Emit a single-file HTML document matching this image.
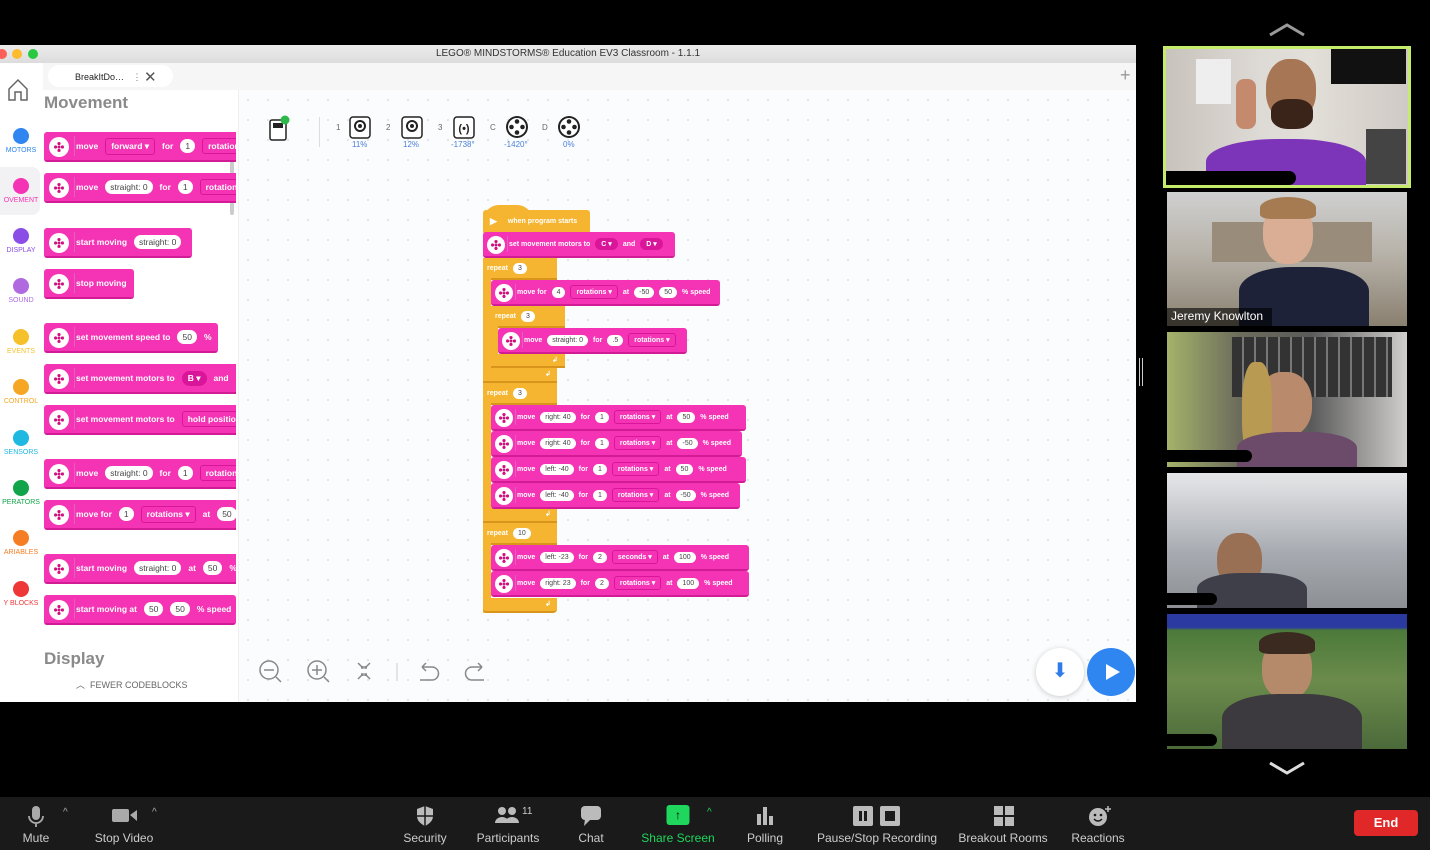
<!DOCTYPE html>
<html><head><meta charset="utf-8"><style>
*{margin:0;padding:0;box-sizing:border-box}
body{width:1430px;height:850px;background:#000;position:relative;overflow:hidden;font-family:"Liberation Sans",sans-serif}
.abs{position:absolute}
.app{position:absolute;left:0;top:45px;width:1136px;height:657px;background:#fff;overflow:hidden}
.tb{position:absolute;left:0;top:0;width:1136px;height:18px;background:linear-gradient(#ececec,#dcdcdc);font-size:10px;color:#333;text-align:center;line-height:18px}
.dot{position:absolute;top:4px;width:10px;height:10px;border-radius:50%}
.canvas{position:absolute;left:238px;top:45px;width:898px;height:612px;background-color:#fbfcfe;background-image:radial-gradient(#dfe3ea 1px,transparent 1.2px);background-size:20px 20px}
.b{position:absolute;background:#f434b4;border-radius:3px;height:26px;color:#fff;font-size:7px;font-weight:bold;display:flex;align-items:center;white-space:nowrap;overflow:hidden;padding-left:26px;gap:5px;border-bottom:2px solid #d21c95}
.b.L{height:30px;font-size:8.5px;padding-left:32px;gap:7px}
.ic{position:absolute;left:4px;top:4px;width:18px;height:18px;border-radius:50%;background:#fff}
.ic::before{content:"";position:absolute;left:4px;top:4px;width:10px;height:10px;border-radius:50%;background:radial-gradient(circle at 50% 15%,#d0107f 1.6px,transparent 1.8px),radial-gradient(circle at 15% 50%,#d0107f 1.6px,transparent 1.8px),radial-gradient(circle at 85% 50%,#d0107f 1.6px,transparent 1.8px),radial-gradient(circle at 50% 85%,#d0107f 1.6px,transparent 1.8px),radial-gradient(circle at 50% 50%,#d0107f 1.4px,transparent 1.6px)}
.L .ic{left:5px;top:5px;width:20px;height:20px}
.L .ic::before{left:5px;top:5px}
.sep{position:absolute;left:24px;top:4px;bottom:4px;width:1px;background:#e060c0}
.L .sep{left:30px}
.p{background:#fff;color:#444;border-radius:9px;padding:2px 5px;font-weight:normal}
.d{background:#d9169a;border-radius:9px;padding:2px 6px;color:#fff}
.dd{border:1px solid #d9169a;border-radius:3px;padding:2px 5px}
.y{position:absolute;background:#f6b530;border-bottom:2px solid #d9951b}
.ylab{position:absolute;color:#fff;font-size:7px;font-weight:bold;display:flex;align-items:center;gap:5px}
.cat{position:absolute;left:0;width:42px;text-align:center;font-size:7px}
.cat i{display:block;width:16px;height:16px;border-radius:50%;margin:0 auto 3px}
.tile{position:absolute;left:1167px;width:240px;overflow:hidden}
.zb{position:absolute;left:0;top:797px;width:1430px;height:53px;background:#1a1a1a}
.zi{position:absolute;top:34px;color:#ccc;font-size:12px;transform:translateX(-50%);white-space:nowrap}
.ico{position:absolute;top:8px;transform:translateX(-50%)}
</style></head><body>

<div class="app">
  <div class="tb">LEGO® MINDSTORMS® Education EV3 Classroom - 1.1.1</div>
  <div class="dot" style="left:-3px;background:#fc5f57"></div>
  <div class="dot" style="left:12px;background:#fdbc2e"></div>
  <div class="dot" style="left:28px;background:#28c840"></div>
  <div class="abs" style="left:43px;top:18px;width:1093px;height:27px;background:#f6f6f6"></div>
  <div class="abs" style="left:48px;top:20px;width:125px;height:22px;background:#fff;border-radius:11px;font-size:9px;color:#222;line-height:22px;padding-left:27px">BreakItDo… <span style="color:#777;margin-left:6px">⋮</span> <span style="font-size:15px;color:#555;position:relative;top:2px">✕</span></div>
  <div class="abs" style="left:1120px;top:20px;font-size:18px;color:#999">+</div>
  <svg class="abs" style="left:7px;top:33px" width="22" height="24" viewBox="0 0 22 24"><path d="M2 11 L11 2 L20 11 V22 H14 V14 H8 V22 H2 Z" fill="none" stroke="#666" stroke-width="1.5"/></svg>
  <div class="abs" style="left:0;top:122px;width:40px;height:48px;background:#f2f2f4;border-radius:0 8px 8px 0"></div>
  <div class="cat" style="top:83px;color:#2f86f0"><i style="background:#2f86f0"></i>MOTORS</div>
  <div class="cat" style="top:133px;color:#f434b4"><i style="background:#f434b4"></i>OVEMENT</div>
  <div class="cat" style="top:183px;color:#8a4de6"><i style="background:#8a4de6"></i>DISPLAY</div>
  <div class="cat" style="top:233px;color:#b06ae0"><i style="background:#b06ae0"></i>SOUND</div>
  <div class="cat" style="top:284px;color:#f5c02a"><i style="background:#f5c02a"></i>EVENTS</div>
  <div class="cat" style="top:334px;color:#f5a623"><i style="background:#f5a623"></i>CONTROL</div>
  <div class="cat" style="top:385px;color:#1fb8e0"><i style="background:#1fb8e0"></i>SENSORS</div>
  <div class="cat" style="top:435px;color:#11a44a"><i style="background:#11a44a"></i>PERATORS</div>
  <div class="cat" style="top:485px;color:#f57d23"><i style="background:#f57d23"></i>ARIABLES</div>
  <div class="cat" style="top:536px;color:#ee3838"><i style="background:#ee3838"></i>Y BLOCKS</div>
  <div class="abs" style="left:44px;top:48px;font-size:17px;font-weight:bold;color:#8a8a8a">Movement</div>
  <div class="abs" style="left:44px;top:604px;font-size:17px;font-weight:bold;color:#8a8a8a">Display</div>
  <div class="abs" style="left:76px;top:633px;font-size:9px;color:#666">︿ &nbsp;FEWER CODEBLOCKS</div>
  <div class="abs" style="left:230px;top:105px;width:4px;height:65px;background:#ccc;border-radius:2px"></div>
  <div style="position:absolute;left:0;top:0;width:236px;height:657px;overflow:hidden">
   <div class="b L" style="left:44px;top:87px;width:200px"><i class="ic"></i><i class="sep"></i>move <span class="dd">forward ▾</span> for <span class="p">1</span> <span class="dd">rotations</span></div>
   <div class="b L" style="left:44px;top:128px;width:200px"><i class="ic"></i><i class="sep"></i>move <span class="p">straight: 0</span> for <span class="p">1</span> <span class="dd">rotations</span></div>
   <div class="b L" style="left:44px;top:183px;width:148px"><i class="ic"></i><i class="sep"></i>start moving <span class="p">straight: 0</span></div>
   <div class="b L" style="left:44px;top:224px;width:90px"><i class="ic"></i><i class="sep"></i>stop moving</div>
   <div class="b L" style="left:44px;top:278px;width:174px"><i class="ic"></i><i class="sep"></i>set movement speed to <span class="p">50</span> %</div>
   <div class="b L" style="left:44px;top:319px;width:200px"><i class="ic"></i><i class="sep"></i>set movement motors to <span class="d">B ▾</span> and</div>
   <div class="b L" style="left:44px;top:360px;width:200px"><i class="ic"></i><i class="sep"></i>set movement motors to <span class="dd">hold position</span></div>
   <div class="b L" style="left:44px;top:414px;width:200px"><i class="ic"></i><i class="sep"></i>move <span class="p">straight: 0</span> for <span class="p">1</span> <span class="dd">rotations</span></div>
   <div class="b L" style="left:44px;top:455px;width:200px"><i class="ic"></i><i class="sep"></i>move for <span class="p">1</span> <span class="dd">rotations ▾</span> at <span class="p">50</span></div>
   <div class="b L" style="left:44px;top:509px;width:200px"><i class="ic"></i><i class="sep"></i>start moving <span class="p">straight: 0</span> at <span class="p">50</span> %</div>
   <div class="b L" style="left:44px;top:550px;width:192px"><i class="ic"></i><i class="sep"></i>start moving at <span class="p">50</span> <span class="p">50</span> % speed</div>
  </div>
  <div class="canvas"></div>
  <div class="abs" style="left:238px;top:45px;width:1px;height:612px;background:#eee"></div>
  <svg class="abs" style="left:268px;top:69px" width="24" height="28"><rect x="2" y="6" width="16" height="20" rx="2" fill="#fff" stroke="#222" stroke-width="1.5"/><rect x="5" y="9" width="10" height="5" fill="#222"/><circle cx="17" cy="6" r="4.5" fill="#2db84a"/></svg>
  <div class="abs" style="left:319px;top:72px;width:1px;height:30px;background:#ddd"></div>
  <div class="abs" style="left:336px;top:78px;font-size:8px;color:#666">1</div>
  <div class="abs" style="left:386px;top:78px;font-size:8px;color:#666">2</div>
  <div class="abs" style="left:438px;top:78px;font-size:8px;color:#666">3</div>
  <div class="abs" style="left:490px;top:78px;font-size:8px;color:#666">C</div>
  <div class="abs" style="left:542px;top:78px;font-size:8px;color:#666">D</div>
  <svg class="abs" style="left:349px;top:71px" width="240" height="24">
   <rect x="1" y="1" width="20" height="21" rx="3" fill="#fff" stroke="#222" stroke-width="1.5"/><circle cx="11" cy="10" r="5" fill="none" stroke="#222" stroke-width="2"/><circle cx="11" cy="10" r="2" fill="#222"/>
   <rect x="53" y="1" width="20" height="21" rx="3" fill="#fff" stroke="#222" stroke-width="1.5"/><circle cx="63" cy="10" r="5" fill="none" stroke="#222" stroke-width="2"/><circle cx="63" cy="10" r="2" fill="#222"/>
   <rect x="105" y="1" width="20" height="21" rx="3" fill="#fff" stroke="#222" stroke-width="1.5"/><text x="115" y="16" font-size="11" font-weight="bold" text-anchor="middle" fill="#222">(•)</text>
   <circle cx="168" cy="11" r="11" fill="#222"/><circle cx="168" cy="11" r="9" fill="#fff"/><circle cx="168" cy="5.5" r="2.3" fill="#222"/><circle cx="168" cy="16.5" r="2.3" fill="#222"/><circle cx="162.5" cy="11" r="2.3" fill="#222"/><circle cx="173.5" cy="11" r="2.3" fill="#222"/>
   <circle cx="220" cy="11" r="11" fill="#222"/><circle cx="220" cy="11" r="9" fill="#fff"/><circle cx="220" cy="5.5" r="2.3" fill="#222"/><circle cx="220" cy="16.5" r="2.3" fill="#222"/><circle cx="214.5" cy="11" r="2.3" fill="#222"/><circle cx="225.5" cy="11" r="2.3" fill="#222"/>
  </svg>
  <div class="abs" style="left:352px;top:95px;font-size:8px;color:#4a7fd8">11%</div>
  <div class="abs" style="left:403px;top:95px;font-size:8px;color:#4a7fd8">12%</div>
  <div class="abs" style="left:451px;top:95px;font-size:8px;color:#4a7fd8">-1738°</div>
  <div class="abs" style="left:504px;top:95px;font-size:8px;color:#4a7fd8">-1420°</div>
  <div class="abs" style="left:563px;top:95px;font-size:8px;color:#4a7fd8">0%</div>

  <div class="y" style="left:483px;top:160px;width:50px;height:16px;border-radius:22px 22px 0 0;border:none"></div>
  <div class="y" style="left:483px;top:165px;width:107px;height:23px;border-radius:3px 3px 0 0;border:none"></div>
  <div class="ylab" style="left:490px;top:171px"><span style="font-size:9px">▶</span><span style="margin-left:6px">when program starts</span></div>
  <div class="y" style="left:483px;top:213px;width:74px;height:22px"></div>
  <div class="y" style="left:483px;top:213px;width:8px;height:125px;border:none"></div>
  <div class="y" style="left:483px;top:323px;width:74px;height:15px"></div>
  <div class="y" style="left:491px;top:261px;width:74px;height:22px"></div>
  <div class="y" style="left:491px;top:261px;width:7px;height:64px;border:none"></div>
  <div class="y" style="left:491px;top:309px;width:74px;height:14px"></div>
  <div class="y" style="left:483px;top:338px;width:74px;height:22px"></div>
  <div class="y" style="left:483px;top:338px;width:8px;height:140px;border:none"></div>
  <div class="y" style="left:483px;top:463px;width:74px;height:15px"></div>
  <div class="y" style="left:483px;top:478px;width:74px;height:22px"></div>
  <div class="y" style="left:483px;top:478px;width:8px;height:90px;border:none"></div>
  <div class="y" style="left:483px;top:553px;width:74px;height:15px;border-radius:0 0 4px 4px"></div>
  <div class="ylab" style="left:487px;top:218px">repeat <span class="p" style="font-size:7px">3</span></div>
  <div class="ylab" style="left:495px;top:266px">repeat <span class="p" style="font-size:7px">3</span></div>
  <div class="ylab" style="left:487px;top:343px">repeat <span class="p" style="font-size:7px">3</span></div>
  <div class="ylab" style="left:487px;top:483px">repeat <span class="p" style="font-size:7px">10</span></div>
  <div class="ylab" style="left:552px;top:311px">↲</div>
  <div class="ylab" style="left:545px;top:325px">↲</div>
  <div class="ylab" style="left:545px;top:465px">↲</div>
  <div class="ylab" style="left:545px;top:555px">↲</div>

  <div class="b" style="left:483px;top:187px;width:192px"><i class="ic"></i><i class="sep"></i>set movement motors to <span class="d">C ▾</span> and <span class="d">D ▾</span></div>
  <div class="b" style="left:491px;top:235px;width:229px"><i class="ic"></i><i class="sep"></i>move for <span class="p">4</span> <span class="dd">rotations ▾</span> at <span class="p">-50</span> <span class="p">50</span> % speed</div>
  <div class="b" style="left:498px;top:283px;width:189px"><i class="ic"></i><i class="sep"></i>move <span class="p">straight: 0</span> for <span class="p">.5</span> <span class="dd">rotations ▾</span></div>
  <div class="b" style="left:491px;top:360px;width:255px"><i class="ic"></i><i class="sep"></i>move <span class="p">right: 40</span> for <span class="p">1</span> <span class="dd">rotations ▾</span> at <span class="p">50</span> % speed</div>
  <div class="b" style="left:491px;top:386px;width:251px"><i class="ic"></i><i class="sep"></i>move <span class="p">right: 40</span> for <span class="p">1</span> <span class="dd">rotations ▾</span> at <span class="p">-50</span> % speed</div>
  <div class="b" style="left:491px;top:412px;width:255px"><i class="ic"></i><i class="sep"></i>move <span class="p">left: -40</span> for <span class="p">1</span> <span class="dd">rotations ▾</span> at <span class="p">50</span> % speed</div>
  <div class="b" style="left:491px;top:438px;width:249px"><i class="ic"></i><i class="sep"></i>move <span class="p">left: -40</span> for <span class="p">1</span> <span class="dd">rotations ▾</span> at <span class="p">-50</span> % speed</div>
  <div class="b" style="left:491px;top:500px;width:258px"><i class="ic"></i><i class="sep"></i>move <span class="p">left: -23</span> for <span class="p">2</span> <span class="dd">seconds ▾</span> at <span class="p">100</span> % speed</div>
  <div class="b" style="left:491px;top:526px;width:258px"><i class="ic"></i><i class="sep"></i>move <span class="p">right: 23</span> for <span class="p">2</span> <span class="dd">rotations ▾</span> at <span class="p">100</span> % speed</div>

  <svg class="abs" style="left:258px;top:614px" width="240" height="26" fill="none" stroke="#888" stroke-width="1.5">
   <circle cx="11" cy="11" r="9"/><path d="M6 11H16M18 18L23 23"/>
   <circle cx="59" cy="11" r="9"/><path d="M54 11H64M59 6V16M66 18L71 23"/>
   <path d="M100 4L105 9M112 4L107 9M100 20L105 15M112 20L107 15M103 9H105V7M109 9H107V7M103 15H105V17M109 15H107V17"/>
   <path d="M139 4V22" stroke="#ddd"/>
   <path d="M164 8H174A6 6 0 0 1 174 21H162M164 8L168 4M164 8L168 12"/>
   <path d="M224 8H214A6 6 0 0 0 214 21H226M224 8L220 4M224 8L220 12"/>
  </svg>
  <div class="abs" style="left:1036px;top:603px;width:48px;height:48px;border-radius:50%;background:#fff;box-shadow:0 1px 6px rgba(0,0,0,.2);color:#2f7ce8;font-size:20px;text-align:center;line-height:46px">⬇</div>
  <div class="abs" style="left:1087px;top:603px;width:48px;height:48px;border-radius:50%;background:#2f86f0"></div>
  <svg class="abs" style="left:1103px;top:617px" width="20" height="20"><path d="M3 2L17 10L3 18Z" fill="#fff"/></svg>
</div>
<div class="abs" style="left:1139px;top:358px;width:4px;height:28px;border-left:1px solid #ccc;border-right:1px solid #ccc"></div>

<svg class="abs" style="left:1268px;top:22px" width="38" height="16"><path d="M2 13L19 3L36 13" fill="none" stroke="#999" stroke-width="3"/></svg>
<svg class="abs" style="left:1268px;top:760px" width="38" height="16"><path d="M2 3L19 13L36 3" fill="none" stroke="#ddd" stroke-width="3"/></svg>
<div class="abs" style="left:1163px;top:46px;width:248px;height:142px;border:3px solid #c4ec6a;background:#7a6a60;overflow:hidden">
 <div class="abs" style="left:0;top:0;width:242px;height:136px;background:linear-gradient(90deg,#c8c3bc,#dedad6 40%,#e2ded8 60%,#cfcac5)"></div>
 <div class="abs" style="left:165px;top:0;width:75px;height:35px;background:#111"></div>
 <div class="abs" style="left:30px;top:10px;width:35px;height:45px;background:#eee"></div>
 <div class="abs" style="left:100px;top:10px;width:50px;height:62px;background:#a67655;border-radius:45%"></div>
 <div class="abs" style="left:105px;top:50px;width:42px;height:30px;background:#3a241a;border-radius:40%"></div>
 <div class="abs" style="left:40px;top:90px;width:160px;height:50px;background:#7c34b8;border-radius:45% 45% 0 0"></div>
 <div class="abs" style="left:70px;top:30px;width:20px;height:50px;background:#c58a6d;border-radius:8px"></div>
 <div class="abs" style="left:200px;top:80px;width:40px;height:55px;background:#444"></div>
 <div class="abs" style="left:0;top:122px;width:130px;height:14px;background:#000;border-radius:0 7px 7px 0"></div>
</div>
<div class="tile" style="top:192px;height:134px;background:linear-gradient(#cfd0d0,#b8b3aa 45%,#8a8070)">
 <div class="abs" style="left:45px;top:30px;width:160px;height:40px;background:#9a8c7a"></div>
 <div class="abs" style="left:96px;top:10px;width:50px;height:62px;background:#d9ae95;border-radius:45%"></div>
 <div class="abs" style="left:93px;top:5px;width:56px;height:22px;background:#a77b52;border-radius:50% 50% 20% 20%"></div>
 <div class="abs" style="left:72px;top:75px;width:130px;height:60px;background:#1d2238;border-radius:40% 40% 0 0"></div>
 <div class="abs" style="left:0;top:116px;width:105px;height:18px;background:rgba(0,0,0,.6)"></div>
 <div class="abs" style="left:4px;top:117px;color:#fff;font-size:12px">Jeremy Knowlton</div>
</div>
<div class="tile" style="top:332px;height:135px;background:linear-gradient(90deg,#a3b36a,#6d6c5c 30%,#5a5a5a 60%,#d0cfcc)">
 <div class="abs" style="left:65px;top:5px;width:160px;height:60px;background:repeating-linear-gradient(90deg,#333 0 10px,#777 10px 12px)"></div>
 <div class="abs" style="left:90px;top:40px;width:55px;height:65px;background:#b98b6c;border-radius:45%"></div>
 <div class="abs" style="left:75px;top:30px;width:30px;height:100px;background:#b99a52;border-radius:40%"></div>
 <div class="abs" style="left:70px;top:100px;width:120px;height:40px;background:#6b4a6a;border-radius:40% 40% 0 0"></div>
 <div class="abs" style="left:0;top:118px;width:85px;height:12px;background:#000;border-radius:0 6px 6px 0"></div>
</div>
<div class="tile" style="top:473px;height:135px;background:linear-gradient(#e6e7e9,#a6aab0 60%,#8c8f93)">
 <div class="abs" style="left:50px;top:60px;width:45px;height:55px;background:#9a7055;border-radius:45%"></div>
 <div class="abs" style="left:30px;top:100px;width:110px;height:40px;background:#3e3f48;border-radius:40% 40% 0 0"></div>
 <div class="abs" style="left:0;top:120px;width:50px;height:12px;background:#000;border-radius:0 6px 6px 0"></div>
</div>
<div class="tile" style="top:614px;height:135px;background:linear-gradient(#2a3aa0 0 10%,#4c7a3a 12%,#6b8b4c 50%,#4b6a3a)">
 <div class="abs" style="left:95px;top:25px;width:50px;height:60px;background:#b58a6b;border-radius:45%"></div>
 <div class="abs" style="left:92px;top:18px;width:56px;height:22px;background:#3a2a20;border-radius:50% 50% 20% 20%"></div>
 <div class="abs" style="left:55px;top:80px;width:140px;height:60px;background:#3c3a3e;border-radius:40% 40% 0 0"></div>
 <div class="abs" style="left:0;top:120px;width:50px;height:12px;background:#000;border-radius:0 6px 6px 0"></div>
</div>

<div class="zb">
 <svg class="ico" style="left:36px" width="20" height="24"><rect x="6" y="1" width="8" height="14" rx="4" fill="#aaa"/><path d="M3 11A7 7 0 0 0 17 11M10 18V22" stroke="#aaa" stroke-width="1.8" fill="none"/></svg>
 <div class="abs" style="left:63px;top:10px;color:#aaa;font-size:10px">^</div>
 <div class="zi" style="left:36px">Mute</div>
 <svg class="ico" style="left:125px" width="28" height="20"><rect x="1" y="4" width="17" height="13" rx="2" fill="#aaa"/><path d="M19 10L26 5V16Z" fill="#aaa"/></svg>
 <div class="abs" style="left:152px;top:10px;color:#aaa;font-size:10px">^</div>
 <div class="zi" style="left:124px">Stop Video</div>
 <svg class="ico" style="left:425px" width="20" height="22"><path d="M10 1L18 4V11C18 16 14 19 10 21C6 19 2 16 2 11V4Z" fill="#bbb"/><path d="M10 1V21M2 11H18" stroke="#1a1a1a" stroke-width="1.5"/></svg>
 <div class="zi" style="left:425px">Security</div>
 <svg class="ico" style="left:508px" width="28" height="20"><circle cx="8" cy="6" r="4" fill="#bbb"/><path d="M1 18A7 6 0 0 1 15 18Z" fill="#bbb"/><circle cx="18" cy="6" r="4" fill="#bbb"/><path d="M11 18A7 6 0 0 1 25 18Z" fill="#bbb"/></svg>
 <div class="abs" style="left:522px;top:9px;color:#ccc;font-size:10px">11</div>
 <div class="zi" style="left:508px">Participants</div>
 <svg class="ico" style="left:591px" width="22" height="22"><rect x="1" y="1" width="20" height="14" rx="4" fill="#bbb"/><path d="M5 14L4 21L11 14Z" fill="#bbb"/></svg>
 <div class="zi" style="left:591px">Chat</div>
 <div class="ico" style="left:678px;width:23px;height:20px;background:#1fd75c;border-radius:3px;color:#000;font-size:12px;text-align:center;line-height:20px;font-weight:bold">↑</div>
 <div class="abs" style="left:707px;top:10px;color:#1fd75c;font-size:10px">^</div>
 <div class="zi" style="left:678px;color:#1fd75c">Share Screen</div>
 <svg class="ico" style="left:765px" width="20" height="22"><rect x="2" y="9" width="4" height="11" fill="#bbb"/><rect x="8" y="2" width="4" height="18" fill="#bbb"/><rect x="14" y="11" width="4" height="9" fill="#bbb"/></svg>
 <div class="zi" style="left:765px">Polling</div>
 <svg class="ico" style="left:877px" width="50" height="22"><rect x="1" y="1" width="20" height="20" rx="2" fill="#bbb"/><rect x="7" y="6" width="3" height="10" fill="#1a1a1a"/><rect x="12" y="6" width="3" height="10" fill="#1a1a1a"/><rect x="28" y="1" width="20" height="20" rx="2" fill="#bbb"/><rect x="33" y="6" width="10" height="10" fill="#1a1a1a"/></svg>
 <div class="zi" style="left:877px">Pause/Stop Recording</div>
 <svg class="ico" style="left:1004px" width="22" height="22"><rect x="1" y="1" width="9" height="9" fill="#bbb"/><rect x="12" y="1" width="9" height="9" fill="#bbb"/><rect x="1" y="12" width="9" height="9" fill="#bbb"/><rect x="12" y="12" width="9" height="9" fill="#bbb"/></svg>
 <div class="zi" style="left:1003px">Breakout Rooms</div>
 <svg class="ico" style="left:1100px" width="24" height="22"><circle cx="10" cy="12" r="9" fill="#bbb"/><circle cx="7" cy="10" r="1.3" fill="#1a1a1a"/><circle cx="13" cy="10" r="1.3" fill="#1a1a1a"/><path d="M6 14Q10 18 14 14" stroke="#1a1a1a" stroke-width="1.5" fill="none"/><path d="M20 1V7M17 4H23" stroke="#bbb" stroke-width="1.5"/></svg>
 <div class="zi" style="left:1098px">Reactions</div>
 <div class="abs" style="left:1354px;top:13px;width:64px;height:26px;background:#e02828;border-radius:4px;color:#fff;font-size:13px;font-weight:bold;text-align:center;line-height:26px">End</div>
</div>
</body></html>
